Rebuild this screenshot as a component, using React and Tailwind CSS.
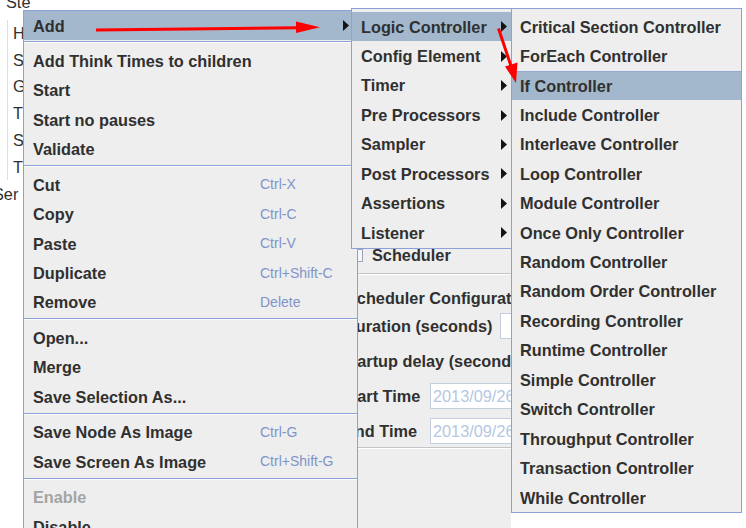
import React from "react";

const mainItems = [
  { t: "Add", arrow: true, hl: true },
  "sep",
  { t: "Add Think Times to children" },
  { t: "Start" },
  { t: "Start no pauses" },
  { t: "Validate" },
  "sep",
  { t: "Cut", k: "Ctrl-X" },
  { t: "Copy", k: "Ctrl-C" },
  { t: "Paste", k: "Ctrl-V" },
  { t: "Duplicate", k: "Ctrl+Shift-C" },
  { t: "Remove", k: "Delete" },
  "sep",
  { t: "Open..." },
  { t: "Merge" },
  { t: "Save Selection As..." },
  "sep",
  { t: "Save Node As Image", k: "Ctrl-G" },
  { t: "Save Screen As Image", k: "Ctrl+Shift-G" },
  "sep",
  { t: "Enable", dis: true },
  { t: "Disable" },
  { t: "Toggle" },
];

const addItems = [
  "Logic Controller",
  "Config Element",
  "Timer",
  "Pre Processors",
  "Sampler",
  "Post Processors",
  "Assertions",
  "Listener",
];

const logicItems = [
  "Critical Section Controller",
  "ForEach Controller",
  "If Controller",
  "Include Controller",
  "Interleave Controller",
  "Loop Controller",
  "Module Controller",
  "Once Only Controller",
  "Random Controller",
  "Random Order Controller",
  "Recording Controller",
  "Runtime Controller",
  "Simple Controller",
  "Switch Controller",
  "Throughput Controller",
  "Transaction Controller",
  "While Controller",
];

function Arrow() {
  return (
    <svg width="6" height="11" viewBox="0 0 6 11" className="shrink-0">
      <polygon points="0,0 6,5.5 0,11" fill="#141414" />
    </svg>
  );
}

function Sep() {
  return (
    <div className="h-[6px] pt-[1px]">
      <div className="h-px bg-[#8da1d8]" />
      <div className="h-px bg-white" />
    </div>
  );
}

function App() {
  return (
    <div className="relative w-[746px] h-[528px] overflow-hidden bg-white font-['Liberation_Sans',Arial,sans-serif] text-[16.3px] text-[#303030]">
      {/* background window */}
      <div className="flex h-full">
        {/* tree column */}
        <div className="w-[300px] shrink-0 bg-white">
          <div className="h-[19.6px] overflow-hidden">
            <div className="-mt-[6.5px] pl-[6px] leading-[16px] whitespace-nowrap">Ste</div>
          </div>
          <div className="ml-[7px] border-l border-[#e0e0e0] pl-[5px]">
            {["HTTP Cookie Manager", "Summary Report", "Graph Results", "Thread Group", "Simple Controller", "Transaction Controller"].map((s, i) => (
              <div key={i} className="h-[26.8px] flex items-center whitespace-nowrap">
                {s}
              </div>
            ))}
          </div>
          <div className="h-[26.8px] flex items-center whitespace-nowrap -ml-[7px]">Ser</div>
        </div>

        {/* right panel */}
        <div className="w-[211px] shrink-0 mt-[10px] bg-[#eeeeee] overflow-hidden font-bold whitespace-nowrap">
          <div className="h-[231px]" />
          <div className="h-[28px] flex items-center">
            <div className="ml-[50px] w-[13px] h-[13px] border border-[#9aa6b8] bg-[#f5f7fa] shrink-0" />
            <span className="ml-[9px]">Scheduler</span>
          </div>
          <div className="h-[4px]" />
          <div className="h-px bg-[#c4c4c4]" />
          <div className="h-px bg-white" />
          <div className="h-[9px]" />
          <div className="h-[28px] flex items-center pl-[46px]">Scheduler Configuration</div>
          <div className="h-[28px] flex items-center">
            <div className="w-[200px] shrink-0 pl-[44px]">Duration (seconds)</div>
            <div className="w-[60px] h-[26px] shrink-0 bg-white border border-[#c5cede]" />
          </div>
          <div className="h-[7px]" />
          <div className="h-[28px] flex items-center pl-[41px]">Startup delay (seconds)</div>
          <div className="h-[7px]" />
          <div className="h-[28px] flex items-center">
            <div className="w-[130px] shrink-0 pl-[41px]">Start Time</div>
            <div className="w-[120px] h-[26px] shrink-0 bg-white border border-[#c5cede] flex items-center pl-[2px] font-normal text-[#b5c7e3]">
              2013/09/26 10:23:45
            </div>
          </div>
          <div className="h-[7px]" />
          <div className="h-[28px] flex items-center">
            <div className="w-[130px] shrink-0 pl-[44px]">End Time</div>
            <div className="w-[120px] h-[26px] shrink-0 bg-white border border-[#c5cede] flex items-center pl-[2px] font-normal text-[#b5c7e3]">
              2013/09/26 10:23:45
            </div>
          </div>
          <div className="h-[2px]" />
          <div className="h-px bg-[#c4c4c4]" />
          <div className="h-px bg-white" />
        </div>

        <div className="flex-1 bg-white" />
      </div>

      {/* main popup menu */}
      <div className="absolute left-[23px] top-[10px] w-[335px] border border-[#8da1d8] bg-[#eeeeee] font-bold whitespace-nowrap">
        {mainItems.map((it, i) =>
          it === "sep" ? (
            <Sep key={i} />
          ) : (
            <div
              key={i}
              className={
                it.hl
                  ? "flex items-center h-[29.44px] pl-[9px] pr-[8px] bg-[#a3b8cc]"
                  : "flex items-center h-[29.44px] pl-[9px] pr-[8px]"
              }
            >
              <span className={it.dis ? "w-[227px] shrink-0 text-[#a4a4a4]" : "w-[227px] shrink-0"}>{it.t}</span>
              {it.k && <span className="text-[14px] font-normal text-[#8094c8]">{it.k}</span>}
              {it.arrow && (
                <span className="ml-auto flex">
                  <Arrow />
                </span>
              )}
            </div>
          )
        )}
      </div>

      {/* Add submenu */}
      <div className="absolute left-[351px] top-[8px] w-[167px] border border-[#8da1d8] bg-[#eeeeee] pt-[3px] font-bold whitespace-nowrap">
        {addItems.map((t, i) => (
          <div
            key={i}
            className={
              i === 0
                ? "flex items-center h-[29.44px] pl-[9px] pr-[10px] bg-[#a3b8cc]"
                : "flex items-center h-[29.44px] pl-[9px] pr-[10px]"
            }
          >
            <span>{t}</span>
            <span className="ml-auto flex">
              <Arrow />
            </span>
          </div>
        ))}
      </div>

      {/* Logic Controller submenu */}
      <div className="absolute left-[511px] top-[8px] w-[231px] border border-[#8da1d8] bg-[#eeeeee] pt-[3px] font-bold whitespace-nowrap">
        {logicItems.map((t, i) => (
          <div
            key={i}
            className={
              i === 2
                ? "flex items-center h-[29.44px] pl-[8px] bg-[#a3b8cc] border-t border-[#93a8d2]"
                : "flex items-center h-[29.44px] pl-[8px]"
            }
          >
            {t}
          </div>
        ))}
      </div>

      {/* red annotation arrows */}
      <svg className="absolute inset-0 pointer-events-none" width="746" height="528" viewBox="0 0 746 528">
        <line x1="96" y1="30" x2="298" y2="27.8" stroke="#ff0000" strokeWidth="3" />
        <polygon points="296,21.5 320,27.3 296,33" fill="#ff0000" />
        <line x1="498.5" y1="28.5" x2="511" y2="66" stroke="#ff0000" strokeWidth="3" />
        <polygon points="505,66.5 517.5,62.5 516,83" fill="#ff0000" />
      </svg>
    </div>
  );
}

export default App;
